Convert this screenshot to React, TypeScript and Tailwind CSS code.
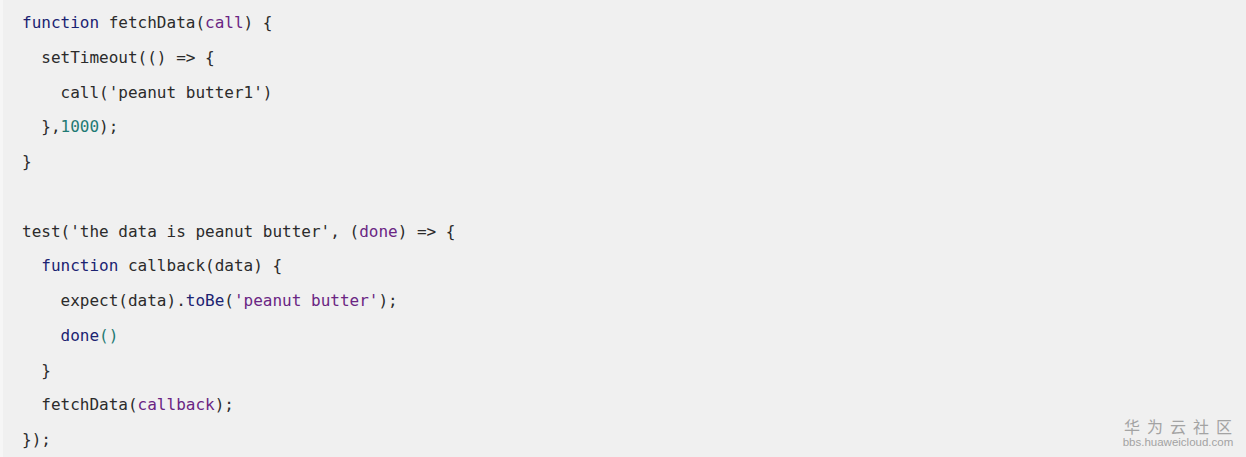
import React from 'react';

type Tok = [string, string?];

const KW = 'text-[#1b2372]';
const PARAM = 'text-[#6a2583]';
const NUM = 'text-[#1f7a74]';

// one entry per row of the snippet, blank rows as empty arrays
const lines: { indent: number; toks: Tok[] }[] = [
  { indent: 0, toks: [['function', KW], [' fetchData('], ['call', PARAM], [') {']] },
  { indent: 1, toks: [['setTimeout(() => {']] },
  { indent: 2, toks: [["call('peanut butter1')"]] },
  { indent: 1, toks: [['},'], ['1000', NUM], [');']] },
  { indent: 0, toks: [['}']] },
  { indent: 0, toks: [] },
  { indent: 0, toks: [["test('the data is peanut butter', ("], ['done', PARAM], [') => {']] },
  { indent: 1, toks: [['function', KW], [' callback(data) {']] },
  { indent: 2, toks: [['expect(data).'], ['toBe', KW], ["("], ["'peanut butter'", PARAM], [');']] },
  { indent: 2, toks: [['done', KW], ['()', NUM]] },
  { indent: 1, toks: [['}']] },
  { indent: 1, toks: [['fetchData('], ['callback', PARAM], [');']] },
  { indent: 0, toks: [['});']] },
];

export default function App() {
  return (
    <div className="relative w-[1246px] h-[457px] overflow-hidden bg-[#f0f0f0] border-l-[3px] border-[#f6f6f6]">
      <div
        className="pl-[19px] pt-[6px] text-[16px] text-[#2b2b2b] whitespace-pre"
        style={{ fontFamily: '"DejaVu Sans Mono", "Liberation Mono", monospace' }}
      >
        {lines.map((ln, i) => (
          <div key={i} className="h-[34.75px] leading-[34.75px]">
            {'  '.repeat(ln.indent)}
            {ln.toks.map(([t, c], j) => (
              <span key={j} className={c}>
                {t}
              </span>
            ))}
          </div>
        ))}
      </div>

      {/* site watermark */}
      <div className="absolute right-[7px] bottom-[9px] flex flex-col items-center text-[#a3a3a3]">
        <div
          className="text-[16px] leading-[18px] tracking-[7px] pl-[7px]"
          style={{ fontFamily: '"Noto Sans CJK SC", sans-serif' }}
        >
          华为云社区
        </div>
        <div
          className="text-[11.5px] leading-[12px] mt-[1px]"
          style={{ fontFamily: '"Liberation Sans", Arial, sans-serif' }}
        >
          bbs.huaweicloud.com
        </div>
      </div>
    </div>
  );
}
